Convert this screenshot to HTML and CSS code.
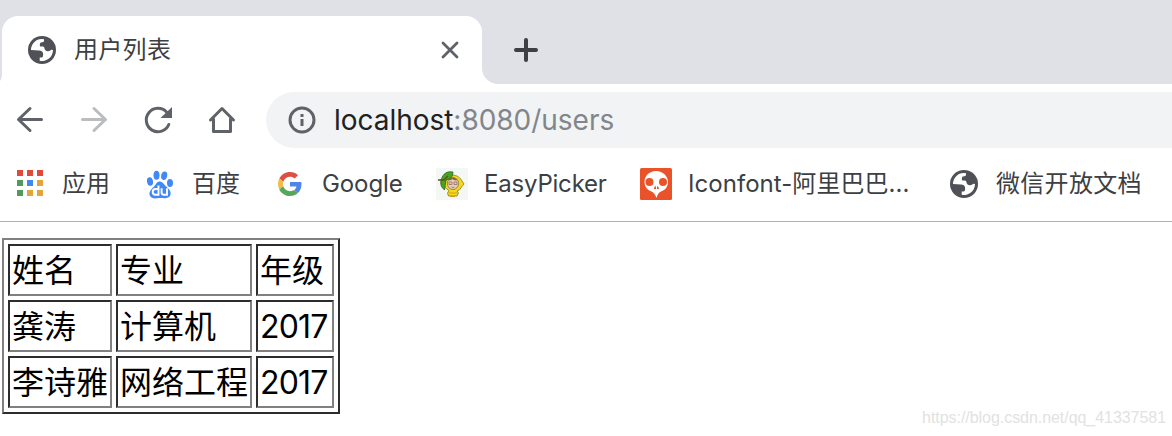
FILE: index.html
```html
<!DOCTYPE html>
<html lang="zh-CN">
<head>
<meta charset="utf-8">
<title>用户列表</title>
<link rel="stylesheet" href="styles.css">
</head>
<body>
<svg class="defs" width="0" height="0">
  <symbol id="globe" viewBox="0 0 28 28">
    <circle cx="14" cy="14" r="14" fill="#505157"/>
    <path d="M3 14A11 11 0 0 1 16 3.200V5Q15.700 6.200 14 6.300Q11.700 6.500 11.900 8.200Q11.600 10 12.200 10.400H15.200Q16.600 10.800 16.700 13.200Q17.500 15.300 20 15.200Q22 15.300 23.200 13.800L25 14A11 11 0 0 1 11.700 24.800V21.500H13.500Q15.300 21.300 15.200 18.500Q15.100 14.700 11 14.500Z" fill="#fff"/>
  </symbol>
</svg>
<header class="tabstrip">
  <svg class="tab-foot" width="2" height="16"><path d="M2 6Q2 11 0 13V16H2Z" fill="#fff"/></svg>
  <div class="tab">
    <svg class="tab-icon" width="28" height="28"><use href="#globe"/></svg>
    <span class="tab-title">用户列表</span>
    <svg class="close" width="20" height="20" viewBox="0 0 20 20"><path d="M3 3L17 17M17 3L3 17"/></svg>
  </div>
  <svg class="tab-foot" width="16" height="16"><path d="M0 0A16 16 0 0 0 16 16H0Z" fill="#fff"/></svg>
  <svg class="new-tab" width="24" height="24" viewBox="0 0 24 24"><path d="M12 2V22M2 12H22"/></svg>
</header>
<nav class="toolbar">
  <svg class="tool" width="32" height="32" viewBox="0 0 32 32"><path d="M27.500 15.500H4.500M16 4.500L4.500 15.500L16 26.500"/></svg>
  <svg class="tool off" width="32" height="32" viewBox="0 0 32 32"><path d="M4.500 15.500H27.500M16 4.500L27.500 15.500L16 26.500"/></svg>
  <svg class="tool" width="32" height="32" viewBox="0 0 32 32"><path d="M26.800 20.500A11.700 11.700 0 1 1 24.500 8"/><path class="solid" d="M30 3V14H18.500Z"/></svg>
  <svg class="tool" width="32" height="32" viewBox="0 0 32 32"><path d="M4.500 16L16 4.500L27.500 16M7.500 15V27.500H24.500V15"/></svg>
  <div class="omnibox">
    <svg class="info" width="28" height="28" viewBox="0 0 28 28"><circle cx="14" cy="14" r="12"/><path d="M14 13V20M14 8V11"/></svg>
    <span class="url">localhost<span class="path">:8080/users</span></span>
  </div>
</nav>
<nav class="bookmarks">
  <a class="bookmark w48">
    <svg width="32" height="32"><path fill="#e04a3b" d="M3 2h6v6H3zM13 2h6v6h-6zM23 2h6v6h-6z"/><path fill="#529a5b" d="M3 12h6v6H3zM3 22h6v6H3z"/><path fill="#4189ed" d="M13 12h6v6h-6z"/><path fill="#e5a438" d="M23 12h6v6h-6zM13 22h6v6h-6zM23 22h6v6h-6z"/></svg>
    <span>应用</span>
  </a>
  <a class="bookmark w48">
    <svg width="32" height="32" fill="#4388f7"><g transform="translate(0 -1.500)"><ellipse cx="6" cy="15" rx="3" ry="4.200" transform="rotate(-10 6 15)"/><ellipse cx="12.500" cy="8.700" rx="3" ry="4.500"/><ellipse cx="20.200" cy="9.200" rx="3" ry="4.300" transform="rotate(12 20.200 9.200)"/><ellipse cx="26" cy="16.500" rx="3" ry="4"/><path d="M15.500 15C18.500 15 19.700 17.500 21.700 19.500C24 21.500 27.500 24.500 26.500 28C25.500 33 19 31.500 16 31.500C13 31.500 8 33.500 5.800 29C4.500 25.500 7.500 22.500 9.500 20.500C12 18.500 12.500 15 15.500 15Z"/><path fill="none" stroke="#fff" stroke-width="1.900" d="M14.500 19V28.300H11.500Q8.700 28.100 8.700 25.500Q8.700 22.500 11.500 22.500H14.500M17.600 21.800V26Q17.600 28.300 20 28.300H23V21.800"/></g></svg>
    <span>百度</span>
  </a>
  <a class="bookmark w80">
    <svg width="32" height="32" viewBox="-4 -4 56 56"><g transform="translate(3 3) scale(.875)"><path fill="#dc5044" d="M24 9.500c3.540 0 6.710 1.220 9.210 3.600l6.850-6.850C35.900 2.380 30.470 0 24 0 14.620 0 6.510 5.380 2.560 13.220l7.980 6.190C12.430 13.720 17.740 9.500 24 9.500z"/><path fill="#5086ec" d="M46.980 24.550c0-1.570-.15-3.090-.38-4.550H24v9.020h12.940c-.58 2.960-2.260 5.480-4.780 7.180l7.730 6c4.510-4.180 7.090-10.360 7.090-17.650z"/><path fill="#f1bd42" d="M10.530 28.590A14.500 14.500 0 0 1 9.770 24c0-1.600.27-3.140.76-4.590l-7.980-6.190A24 24 0 0 0 0 24c0 3.880.92 7.540 2.560 10.780z"/><path fill="#58a65c" d="M24 48c6.480 0 11.930-2.130 15.890-5.810l-7.730-6c-2.150 1.450-4.920 2.300-8.160 2.300-6.260 0-11.570-4.220-13.470-9.910l-7.980 6.190C6.510 42.620 14.620 48 24 48z"/></g></svg>
    <span class="google">Google</span>
  </a>
  <a class="bookmark w122">
    <svg width="32" height="32"><path fill="#f4f8f5" d="M0 0h32v32H0z"/><path fill="#f3da18" stroke="#8a7a1f" stroke-width=".8" d="M11 9C16 5.500 23 7 26 13L28 16L25.500 19Q24 22.500 21 23L22.500 25L21 28H12.500L11.500 25L13 22.500Q8 20 8 15Z"/><ellipse cx="17" cy="15.500" rx="5.600" ry="6" fill="#efcbb0" stroke="#8a6a4b" stroke-width=".8"/><path fill="#7e604e" d="M12.500 12Q17 7.500 21.500 12Q18 13 16.500 11Q14 13 12.500 12"/><path fill="none" stroke="#76676a" stroke-width=".7" d="M13 14h3v2.500h-3zM18 14h3v2.500h-3zM15.500 19Q17 20 18.500 19"/><path fill="#48a321" stroke="#28641d" stroke-width=".8" d="M5 12Q8 2 17 4Q17 11 10 12L8.500 22Q3.500 18 5 12Z"/><path fill="none" stroke="#674a23" stroke-width="1.300" d="M2 12L8 12L12 8"/><path fill="#cf9f22" d="M13 24.500h8.500v1H13zM14 28h5v1h-5z"/></svg>
    <span class="easy">EasyPicker</span>
  </a>
  <a class="bookmark w226">
    <svg width="32" height="32"><rect width="32" height="32" rx="1.500" fill="#ea5329"/><path fill="#fff" d="M16 3C23 3 28 8 28 14Q28 21 21 23.500C18.500 24.500 17.500 27 16.500 30Q14.500 24.500 11.500 23.500Q4.500 21 4.500 14C4.500 8 9 3 16 3Z"/><circle cx="9.500" cy="14" r="4" fill="#ea5329"/><circle cx="23" cy="14" r="4" fill="#ea5329"/><path fill="#ea5329" d="M16 18V21H13.800Q14 18.500 16 18M17 18Q18.800 18.500 19 21H17Z"/></svg>
    <span class="iconfont">Iconfont-阿里巴巴...</span>
  </a>
  <a class="bookmark">
    <svg width="32" height="32"><use href="#globe" x="2" y="2" width="28" height="28"/></svg>
    <span class="wechat">微信开放文档</span>
  </a>
</nav>
<main class="page">
  <table class="users">
    <tr><td class="name">姓名</td><td class="major">专业</td><td class="year">年级</td></tr>
    <tr><td>龚涛</td><td>计算机</td><td class="num">2017</td></tr>
    <tr><td>李诗雅</td><td>网络工程</td><td class="num">2017</td></tr>
  </table>
  <div class="watermark">https://blog.csdn.net/qq_41337581</div>
</main>
</body>
</html>
```
FILE: styles.css
```css
* { box-sizing: border-box; }
body {
  margin: 0;
  width: 1172px;
  height: 436px;
  overflow: hidden;
  background: #fff;
  color: #3c4043;
  font-family: Inter, "Noto Sans CJK SC", sans-serif;
  font-size: 24px;
}
svg { display: block; flex: none; }
.defs { position: absolute; }
.tabstrip {
  display: flex;
  height: 84px;
  padding-top: 16px;
  background: #dfe1e6;
}
.tab {
  display: flex;
  align-items: center;
  width: 480px;
  height: 68px;
  padding: 0 22px 0 26px;
  border-radius: 16px 16px 0 0;
  background: #fff;
}
.tab-title { margin-left: 18px; letter-spacing: .3px; line-height: 36px; }
.close { margin-left: auto; fill: none; stroke: #5f6368; stroke-width: 2.8; stroke-linecap: round; }
.tab-foot { align-self: flex-end; }
.new-tab { margin: 22px 0 0 16px; fill: none; stroke: #3c4043; stroke-width: 4; stroke-linecap: round; }
.toolbar { display: flex; align-items: center; height: 72px; padding-left: 14px; gap: 32px; }
.tool { fill: none; stroke: #5f6368; stroke-width: 3; stroke-linecap: round; stroke-linejoin: round; }
.tool.off { stroke: #babcbe; }
.tool .solid { fill: #5f6368; stroke: none; }
.omnibox {
  display: flex;
  align-items: center;
  flex: 1;
  height: 56px;
  margin-left: -4px;
  padding-left: 22px;
  border-radius: 28px 0 0 28px;
  background: #f1f3f4;
}
.info { fill: none; stroke: #5f6368; stroke-width: 3; }
.url { margin-left: 18px; color: #202124; font-size: 28px; letter-spacing: -.03px; white-space: nowrap; }
.path { color: #80868b; }
.bookmarks {
  display: flex;
  align-items: center;
  height: 66px;
  padding: 0 0 10px 14px;
  gap: 34px;
  border-bottom: 1px solid #b0b2b1;
}
.bookmark { display: flex; align-items: center; gap: 16px; white-space: nowrap; line-height: 34px; }
.w48 { width: 96px; }
.w80 { width: 128px; }
.w122 { width: 170px; }
.w226 { width: 274px; }
.google { letter-spacing: -.1px; }
.easy { letter-spacing: -.2px; }
.iconfont { letter-spacing: .05px; }
.wechat { letter-spacing: .3px; }
.page { display: flex; align-items: flex-start; justify-content: space-between; height: 214px; padding: 16px 6px 0 2px; }
.users {
  width: 338px;
  height: 176px;
  table-layout: fixed;
  border: 2px solid;
  border-color: #808080 #2c2c2c #2c2c2c #808080;
  border-spacing: 4px;
  color: #000;
  font-size: 32px;
}
.users td {
  height: 52px;
  padding: 2px 2px 0;
  border: 2px solid;
  border-color: #2c2c2c #808080 #808080 #2c2c2c;
  line-height: 46px;
  white-space: nowrap;
}
.name { width: 104px; }
.major { width: 136px; }
.year { width: 78px; }
.users .num { letter-spacing: -.8px; }
.watermark {
  align-self: flex-end;
  margin-bottom: 8px;
  color: #e2e2e2;
  font: 16px/20px "Liberation Sans", Arial, sans-serif;
  letter-spacing: -.05px;
}
```
